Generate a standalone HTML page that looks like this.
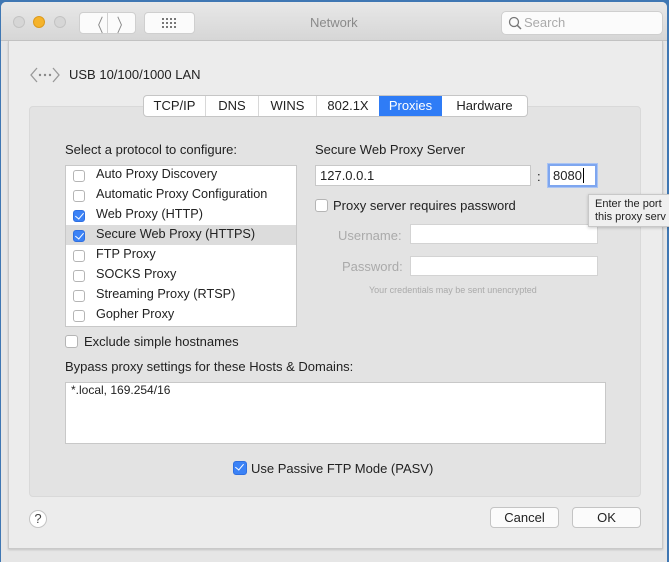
<!DOCTYPE html><html><head><style>
*{box-sizing:border-box;margin:0;padding:0}
body{width:669px;height:553px;background:#3f77b3;position:relative;overflow:hidden;font-family:"Liberation Sans",sans-serif;font-size:13px;color:#222}
.a{position:absolute}
.outer{left:1px;top:2px;width:666px;height:560px;background:#e6e6e6;border-radius:5px 5px 0 0}
.sheet{left:8px;top:41px;width:655px;height:508px;background:#ececec;border:1px solid #c9c9c9;border-top:none;box-shadow:0 1px 2px rgba(0,0,0,.15)}
.win{left:8px;top:0;width:654px;height:553px}
.bar{left:1px;top:2px;width:666px;height:39px;background:linear-gradient(#e8e8e8,#d6d6d6);border-bottom:1px solid #c2c2c2;border-radius:5px 5px 0 0}
.dot{width:12px;height:12px;border-radius:6px;top:14px}
.btn{background:#fbfbfb;border:1px solid #cfcfcf;border-radius:4px}
.panel{left:21px;top:106px;width:612px;height:391px;background:#e3e3e3;border:1px solid #d9d9d9;border-radius:4px}
.cb{width:12px;height:12px;border:1px solid #b5b5b5;border-radius:3px;background:#fff}
.cbc{background:#3b82f6;border-color:#2f6fe0}
.cbc:after{content:"";position:absolute;left:3px;top:0px;width:4px;height:7px;border:solid #fff;border-width:0 1.6px 1.6px 0;transform:rotate(40deg)}
.inp{background:#fff;border:1px solid #c8c8c8}
.t{white-space:nowrap}
.lst .t{font-size:12.7px}
</style></head><body>
<div class="a outer"></div>
<div class="a sheet"></div>
<div class="a bar">
<div class="a dot" style="left:12px;background:#d6d6d6;border:1px solid #c3c3c3"></div>
<div class="a dot" style="left:32px;background:#f5b32b;border:1px solid #dc9a1d"></div>
<div class="a dot" style="left:53px;background:#d6d6d6;border:1px solid #c3c3c3"></div>
<div class="a btn" style="left:78px;top:10px;width:57px;height:22px"></div>
<div class="a" style="left:106px;top:10px;width:1px;height:22px;background:#d0d0d0"></div>
<div class="a t" style="left:87px;top:10px;font-size:18px;color:#888;transform:scaleX(.7)">&#x2329;</div>
<div class="a t" style="left:113px;top:10px;font-size:18px;color:#888;transform:scaleX(.7)">&#x232a;</div>
<div class="a btn" style="left:143px;top:10px;width:51px;height:22px"></div>
<svg class="a" style="left:160px;top:15px" width="16" height="12"><g fill="#777"><rect x="1" y="1" width="2" height="2"/><rect x="5" y="1" width="2" height="2"/><rect x="9" y="1" width="2" height="2"/><rect x="13" y="1" width="2" height="2"/><rect x="1" y="5" width="2" height="2"/><rect x="5" y="5" width="2" height="2"/><rect x="9" y="5" width="2" height="2"/><rect x="13" y="5" width="2" height="2"/><rect x="1" y="9" width="2" height="2"/><rect x="5" y="9" width="2" height="2"/><rect x="9" y="9" width="2" height="2"/><rect x="13" y="9" width="2" height="2"/></g></svg>
<div class="a t" style="left:309px;top:13px;color:#8a8a8a;font-size:13px">Network</div>
<div class="a btn" style="left:500px;top:9px;width:162px;height:24px;border-radius:5px"></div>
<svg class="a" style="left:507px;top:14px" width="14" height="14"><circle cx="6" cy="6" r="4.5" fill="none" stroke="#777" stroke-width="1.3"/><line x1="9.3" y1="9.3" x2="13" y2="13" stroke="#777" stroke-width="1.5"/></svg>
<div class="a t" style="left:523px;top:13px;color:#aaa">Search</div>
</div>
<div class="a win">
<svg class="a" style="left:21px;top:66px" width="32" height="18"><path d="M8 2 L2 9 L8 16 M24 2 L30 9 L24 16" fill="none" stroke="#999" stroke-width="1.3"/><circle cx="11" cy="9" r="1.2" fill="#888"/><circle cx="16" cy="9" r="1.2" fill="#888"/><circle cx="21" cy="9" r="1.2" fill="#888"/></svg>
<div class="a t" style="left:61px;top:67px">USB 10/100/1000 LAN</div>
<div class="a panel"></div>
<div class="a" style="left:135px;top:95px;width:385px;height:22px;background:#fff;border:1px solid #c6c6c6;border-radius:4px;overflow:hidden;display:flex;font-size:13px">
<div style="width:62px;text-align:center;line-height:20px;border-right:1px solid #d8d8d8">TCP/IP</div>
<div style="width:53px;text-align:center;line-height:20px;border-right:1px solid #d8d8d8">DNS</div>
<div style="width:58px;text-align:center;line-height:20px;border-right:1px solid #d8d8d8">WINS</div>
<div style="width:62px;text-align:center;line-height:20px">802.1X</div>
<div style="width:63px;text-align:center;line-height:20px;background:#2f7cf6;color:#fff">Proxies</div>
<div style="flex:1;text-align:center;line-height:20px">Hardware</div>
</div>
<div class="a t" style="left:57px;top:142px">Select a protocol to configure:</div>
<div class="a inp lst" style="left:57px;top:165px;width:232px;height:162px">
<div class="a" style="left:0;top:59px;width:230px;height:20px;background:#dcdcdc"></div>
<div class="a cb" style="left:7px;top:4px"></div><div class="a t" style="left:30px;top:1px">Auto Proxy Discovery</div>
<div class="a cb" style="left:7px;top:24px"></div><div class="a t" style="left:30px;top:21px">Automatic Proxy Configuration</div>
<div class="a cb cbc" style="left:7px;top:44px"></div><div class="a t" style="left:30px;top:41px">Web Proxy (HTTP)</div>
<div class="a cb cbc" style="left:7px;top:64px"></div><div class="a t" style="left:30px;top:61px">Secure Web Proxy (HTTPS)</div>
<div class="a cb" style="left:7px;top:84px"></div><div class="a t" style="left:30px;top:81px">FTP Proxy</div>
<div class="a cb" style="left:7px;top:104px"></div><div class="a t" style="left:30px;top:101px">SOCKS Proxy</div>
<div class="a cb" style="left:7px;top:124px"></div><div class="a t" style="left:30px;top:121px">Streaming Proxy (RTSP)</div>
<div class="a cb" style="left:7px;top:144px"></div><div class="a t" style="left:30px;top:141px">Gopher Proxy</div>
</div>
<div class="a cb" style="left:57px;top:335px;width:13px;height:13px"></div>
<div class="a t" style="left:76px;top:334px">Exclude simple hostnames</div>
<div class="a t" style="left:307px;top:142px">Secure Web Proxy Server</div>
<div class="a inp" style="left:307px;top:165px;width:216px;height:21px"></div>
<div class="a t" style="left:312px;top:168px">127.0.0.1</div>
<div class="a t" style="left:529px;top:169px">:</div>
<div class="a inp" style="left:540px;top:164px;width:49px;height:23px;border:2px solid #7ea6ef;box-shadow:0 0 0 1px #aac4f3"></div>
<div class="a t" style="left:545px;top:168px">8080<span style="border-left:1px solid #000;margin-left:1px"></span></div>
<div class="a cb" style="left:307px;top:199px;width:13px;height:13px"></div>
<div class="a t" style="left:325px;top:198px">Proxy server requires password</div>
<div class="a t" style="left:330px;top:228px;color:#aaa">Username:</div>
<div class="a inp" style="left:402px;top:224px;width:188px;height:20px;border-color:#d3d3d3"></div>
<div class="a t" style="left:334px;top:259px;color:#aaa">Password:</div>
<div class="a inp" style="left:402px;top:256px;width:188px;height:20px;border-color:#d3d3d3"></div>
<div class="a t" style="left:361px;top:285px;font-size:9px;color:#aaa">Your credentials may be sent unencrypted</div>
<div class="a t" style="left:57px;top:359px">Bypass proxy settings for these Hosts &amp; Domains:</div>
<div class="a inp" style="left:57px;top:382px;width:541px;height:62px"></div>
<div class="a t" style="left:63px;top:383px;font-size:12px">*.local, 169.254/16</div>
<div class="a cb cbc" style="left:225px;top:461px;width:14px;height:14px"></div>
<div class="a t" style="left:243px;top:461px">Use Passive FTP Mode (PASV)</div>
<div class="a" style="left:21px;top:510px;width:18px;height:18px;border-radius:9px;background:#fff;border:1px solid #c4c4c4;text-align:center;line-height:16px;font-size:13px;color:#444">?</div>
<div class="a btn" style="left:482px;top:507px;width:69px;height:21px;text-align:center;line-height:19px;border-color:#c4c4c4">Cancel</div>
<div class="a btn" style="left:564px;top:507px;width:69px;height:21px;text-align:center;line-height:19px;border-color:#c4c4c4">OK</div>
</div>
<div class="a" style="left:588px;top:194px;width:90px;height:33px;background:#efefef;border:1px solid #c8c8c8;box-shadow:0 1px 3px rgba(0,0,0,.2);font-size:11px;line-height:13px;padding:3px 0 0 6px;white-space:nowrap">Enter the port<br>this proxy serv</div>
</body></html>
